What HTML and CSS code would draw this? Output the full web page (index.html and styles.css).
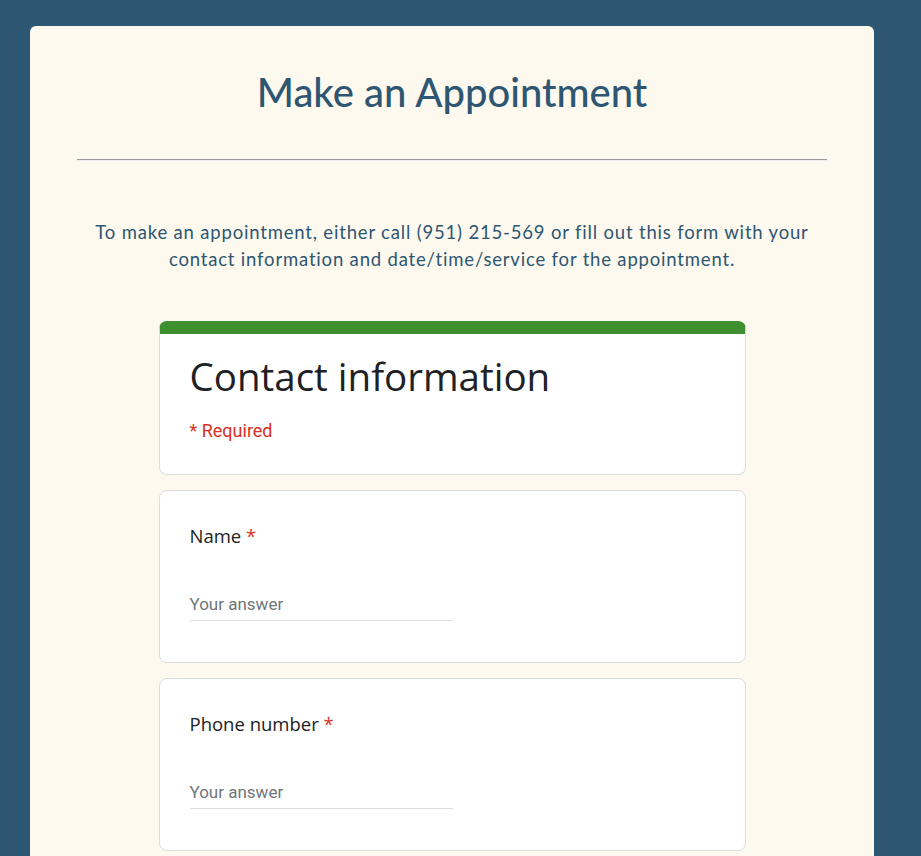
FILE: index.html
```html
<!DOCTYPE html>
<html lang="en">
<head>
<meta charset="utf-8">
<title>Make an Appointment</title>
<link rel="stylesheet" href="styles.css">
</head>
<body>
<main class="panel">
  <h1 class="title">Make an Appointment</h1>
  <hr class="rule">
  <p class="intro">To make an appointment, either call (951) 215-569 or fill out this form with your contact information and date/time/service for the appointment.</p>
  <div class="form">
    <section class="card card-head">
      <h2 class="card-title">Contact information</h2>
      <div class="required">* Required</div>
    </section>
    <section class="card">
      <div class="q-label">Name <span class="star">*</span></div>
      <div class="answer">Your answer</div>
    </section>
    <section class="card">
      <div class="q-label">Phone number <span class="star">*</span></div>
      <div class="answer">Your answer</div>
    </section>
  </div>
</main>
</body>
</html>
```
FILE: styles.css
```css
html, body {
  margin: 0;
  background: #2d5672;
}
body {
  padding: 26px 47px 0 30px;
}
.panel {
  background: #fef9ee;
  border-radius: 6px 6px 0 0;
  padding: 38px 47px 60px;
  min-height: 900px;
  font-family: Lato, "Open Sans", sans-serif;
  color: #2d5672;
}
.title {
  margin: 0;
  text-align: center;
  font-family: Lato, sans-serif;
  font-weight: 500;
  font-size: 40px;
  line-height: 56px;
  color: #2d5672;
}
.rule {
  margin: 39px 0 0;
  border: 0;
  border-top: 1px solid #9a9a9a;
  border-bottom: 1px solid #eeeeee;
}
.intro {
  margin: 58px 0 0;
  text-align: center;
  font-size: 18.5px;
  letter-spacing: 0.82px;
  line-height: 27px;
}
.form {
  width: 587px;
  margin: 48px auto 0;
  display: flex;
  flex-direction: column;
  gap: 15px;
}
.card {
  background: #fff;
  border: 1px solid #dadce0;
  border-radius: 8px;
  padding: 24px 30px 0;
  height: 173px;
  box-sizing: border-box;
  font-family: Roboto, sans-serif;
  color: #202124;
}
.card-head {
  border-top: 13px solid #3d8f2f;
  height: 154px;
  padding-top: 17px;
}
.card-title {
  margin: 0;
  font-family: "Open Sans", Roboto, sans-serif;
  font-weight: 400;
  font-size: 38.5px;
  line-height: 50px;
  color: #202124;
}
.required {
  margin-top: 19px;
  font-size: 18px;
  color: #d93025;
}
.q-label {
  margin-top: 9px;
  font-family: "Open Sans", Roboto, sans-serif;
  font-size: 18.5px;
  line-height: 24px;
}
.star {
  color: #d93025;
}
.answer {
  margin-top: 45px;
  width: 263px;
  font-size: 17px;
  line-height: 22px;
  padding-bottom: 5px;
  color: #70757a;
  border-bottom: 1px solid #dadce0;
}
```
